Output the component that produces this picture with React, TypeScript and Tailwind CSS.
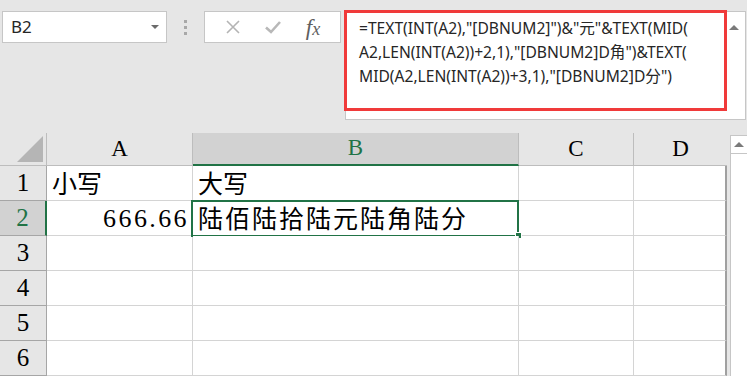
import React from 'react';

const cols = [
  { key: 'A', w: 'w-[146px]' },
  { key: 'B', w: 'w-[326px]' },
  { key: 'C', w: 'w-[115px]' },
  { key: 'D', w: 'w-[93px]' },
];

const serif = "font-['Liberation_Serif','Noto_Sans_CJK_SC',serif]";
const cjk = "font-['Noto_Sans_CJK_SC',sans-serif]";

const rows: { n: number; a?: React.ReactNode; b?: React.ReactNode }[] = [
  { n: 1, a: <span className={`${cjk} pl-[5px] text-[25px]`}>小写</span>, b: <span className={`${cjk} pl-[5px] text-[25px]`}>大写</span> },
  {
    n: 2,
    a: <span className={`${serif} ml-auto pr-[3px] text-[26px] tracking-[2.4px]`}>666.66</span>,
    b: <span className={`${cjk} pl-[5px] text-[25px] tracking-[2px]`}>陆佰陆拾陆元陆角陆分</span>,
  },
  { n: 3 },
  { n: 4 },
  { n: 5 },
  { n: 6 },
];

const FormulaLine = ({ children }: { children: React.ReactNode }) => (
  <div className="h-[24px] leading-[24px] whitespace-nowrap">{children}</div>
);

export default function App() {
  return (
    <div className="w-[747px] h-[376px] overflow-hidden bg-[#e6e6e6] text-[#222]">
      {/* formula bar */}
      <div className="flex h-[120px] items-start pl-[2px] pt-[11px]">
        <div className="flex h-[32px] w-[165px] items-center justify-between border border-[#c6c6c6] bg-white pl-[8px] pr-[7px]">
          <span className="font-['Noto_Sans',sans-serif] text-[17px] text-[#262626]">B2</span>
          <span className="h-0 w-0 border-x-[4px] border-t-[4px] border-x-transparent border-t-[#6b6b6b]" />
        </div>
        <div className="flex h-[32px] w-[37px] flex-col items-center justify-center gap-[3px]">
          <span className="h-[3px] w-[3px] bg-[#a8a8a8]" />
          <span className="h-[3px] w-[3px] bg-[#a8a8a8]" />
          <span className="h-[3px] w-[3px] bg-[#a8a8a8]" />
        </div>
        <div className="flex h-[32px] w-[137px] items-center justify-around border border-[#c6c6c6] bg-white px-[8px]">
          <svg width="16" height="16" viewBox="0 0 16 16">
            <path d="M2 2 L14 14 M14 2 L2 14" stroke="#b4b4b4" strokeWidth="1.6" fill="none" />
          </svg>
          <svg width="18" height="16" viewBox="0 0 18 16">
            <path d="M2 8.5 L7 13 L16 3" stroke="#b8b8b8" strokeWidth="2.6" fill="none" />
          </svg>
          <span className="font-['Liberation_Serif',serif] text-[23px] italic leading-none text-[#5f5f5f]">
            f<span className="text-[18px]">x</span>
          </span>
        </div>
        <div className="relative ml-[4px] h-[109px] w-[401px] border border-[#c6c6c6] bg-white">
          <div className="pl-[13px] pt-[4px] font-['Noto_Sans','Noto_Sans_CJK_SC',sans-serif] text-[15.6px] text-[#262626]">
            <FormulaLine>=TEXT(INT(A2),"[DBNUM2]")&amp;"元"&amp;TEXT(MID(</FormulaLine>
            <FormulaLine>A2,LEN(INT(A2))+2,1),"[DBNUM2]D角")&amp;TEXT(</FormulaLine>
            <FormulaLine>MID(A2,LEN(INT(A2))+3,1),"[DBNUM2]D分")</FormulaLine>
          </div>
          <span className="absolute right-[6px] top-[13px] h-0 w-0 border-x-[5px] border-b-[5px] border-x-transparent border-b-[#7a7a7a]" />
          {/* red annotation box */}
          <div className="absolute left-[-2px] top-[-2px] h-[101px] w-[383px] border-[3px] border-[#f03a3a]" />
        </div>
      </div>

      {/* sheet */}
      <div className="mt-[13px] flex">
        <div className="flex w-[727px] flex-col">
          {/* column header */}
          <div className="flex h-[33px]">
            <div className="relative w-[47px] border-r border-b border-[#bdbdbd] bg-[#e6e6e6]">
              <svg className="absolute bottom-[3px] right-[3px]" width="26" height="26" viewBox="0 0 26 26">
                <path d="M26 0 L26 26 L0 26 Z" fill="#b5b5b5" />
              </svg>
            </div>
            {cols.map((c) => (
              <div
                key={c.key}
                className={`${c.w} flex items-center justify-center border-r ${serif} text-[23px] ${
                  c.key === 'B'
                    ? 'border-b-2 border-r-[#bdbdbd] border-b-[#217346] bg-[#d2d2d2] text-[#217346]'
                    : 'border-b border-[#bdbdbd] bg-[#e6e6e6] text-black'
                } ${c.key === 'D' ? 'border-r-0' : ''}`}
              >
                {c.key}
              </div>
            ))}
          </div>
          {rows.map((r) => (
            <div key={r.n} className="flex h-[35px]">
              <div
                className={`flex w-[47px] items-center justify-center border-b border-[#a6a6a6] ${serif} text-[25px] ${
                  r.n === 2
                    ? 'border-r-2 border-r-[#217346] bg-[#d2d2d2] text-[#217346]'
                    : 'border-r border-r-[#a6a6a6] bg-[#e6e6e6] text-black'
                }`}
              >
                {r.n}
              </div>
              <div className="flex w-[146px] items-center border-r border-b border-[#d4d4d4] bg-white text-black">{r.a}</div>
              <div className="relative flex w-[326px] items-center border-r border-b border-[#d4d4d4] bg-white text-black">
                {r.b}
                {r.n === 2 && (
                  <>
                    <div className="absolute left-[-2px] top-[-1px] h-[37px] w-[328px] border-2 border-[#217346]" />
                    <div className="absolute bottom-[-4px] right-[-4px] h-[7px] w-[7px] border border-white bg-[#217346]" />
                  </>
                )}
              </div>
              <div className="w-[115px] border-r border-b border-[#d4d4d4] bg-white" />
              <div className="w-[93px] border-r-2 border-b border-[#d4d4d4] border-r-[#a0a0a0] bg-white" />
            </div>
          ))}
        </div>
        {/* vertical scrollbar */}
        <div className="flex w-[20px] flex-col bg-[#e6e6e6] pl-[3px] pt-[2px]">
          <div className="flex flex-1 flex-col border-l border-t border-[#c6c6c6] bg-white">
            <div className="flex h-[18px] items-center justify-center border-b border-[#c6c6c6]">
              <span className="h-0 w-0 border-x-[5px] border-b-[5px] border-x-transparent border-b-[#7a7a7a]" />
            </div>
          </div>
        </div>
      </div>
    </div>
  );
}
